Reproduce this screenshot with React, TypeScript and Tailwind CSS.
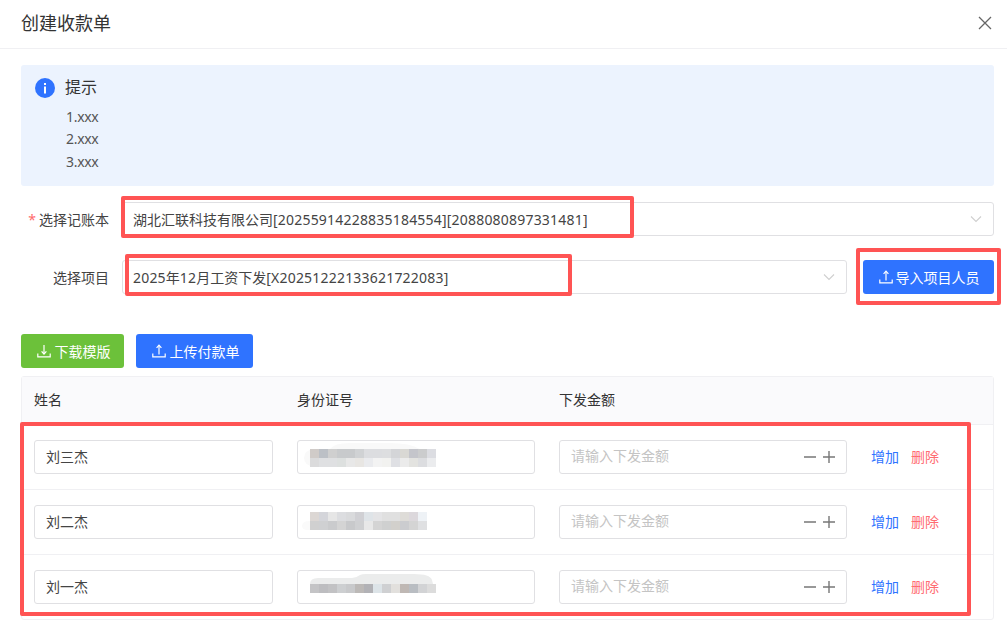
import React, { type ReactNode } from "react";

const rows = [
  {
    name: "刘三杰",
    shift: "translate-y-px",
    blob: "M-6 9q0-8 10-9h16q4-6 20-6h40q20 0 30 6h16v18h-122q-10-2-10-9",
    fill: "#f9f9f9",
    blur: [
      ["#d0cbc8", "#bcc0c6", "#cfcfcf", "#c8cacc", "#c8cacc", "#d0d2d4", "#dcdde0", "#dcdde0", "#dddee0", "#d4d5d8", "#d9d8d4", "#c4c5cb", "#cbcccd", "#dcdde2"],
      ["#dbdbdc", "#dfe0e2", "#dfe0e2", "#dde0df", "#e8e8e8", "#e8e6e3", "#eaebee", "#f3f3f3", "#f2f2f0", "#dfe0e4", "#ebebeb", "#e3e3e0", "#dcdde0", "#ebecee"],
    ],
  },
  {
    name: "刘二杰",
    shift: "-translate-y-px",
    blob: "M-8 14q0-5 8-5h8v9h-10q-6 0-6-4",
    fill: "#fafafa",
    blur: [
      ["#dcd7d4", "#d4d5da", "#e6e6e6", "#dcdde0", "#d9dadc", "#d0d0d4", "#dfe4e8", "#e4e4e6", "#e0e0e0", "#e0e0e0", "#dedcd8", "#dcd8dc", "#eef2f6"],
      ["#d0d0d0", "#cfd0d2", "#cacbcd", "#d4d4d4", "#c8c9cb", "#cfd0d2", "#e8e8e8", "#d4d4d4", "#cfd0d0", "#d2d0cc", "#cbcccf", "#d4d4d4", "#dfe0e2"],
    ],
  },
  {
    name: "刘一杰",
    shift: "-translate-y-[3px]",
    blob: "M0 9q0-6 8-6h34q4 0 8-3 2-1 6-1h48q16 0 18 6l1 4v9h-3v-9z",
    fill: "#ebecec",
    blur: [
      [],
      ["#c4c4c6", "#bdbdc0", "#c2c2c4", "#cdcfd1", "#c8c9cb", "#bcb9b7", "#b2b2b6", "#dde4e8", "#cfd0d2", "#e2e0dd", "#bfb8b4", "#b9bdc2", "#d2d3d5", "#dcdcdc"],
    ],
  },
];

function UploadIcon() {
  return (
    <svg width="14" height="14" viewBox="0 0 14 14" fill="none" stroke="currentColor" strokeWidth="1.2" className="shrink-0">
      <path d="M0.8 9.5v3.3h12.4v-3.3" />
      <path d="M7 10.5V1.5" />
      <path d="M4.6 3.8 7 1.2l2.4 2.6" />
    </svg>
  );
}

function DownloadIcon() {
  return (
    <svg width="14" height="14" viewBox="0 0 14 14" fill="none" stroke="currentColor" strokeWidth="1.2" className="shrink-0">
      <path d="M0.8 9.5v3.3h12.4v-3.3" />
      <path d="M7 1v8.6" />
      <path d="M4.6 7.4 7 10l2.4-2.6" />
    </svg>
  );
}

function Chevron() {
  return (
    <svg width="12" height="8" viewBox="0 0 12 8" fill="none" stroke="#cfcfcf" strokeWidth="1.1">
      <path d="M1 1.5l5 5 5-5" />
    </svg>
  );
}

function Select({ children, className }: { children: ReactNode; className: string }) {
  return (
    <div className={`flex h-[34px] items-center justify-between rounded-[3px] border border-[#e0e0e3] pl-[10px] pr-[11px] ${className}`}>
      <span className="whitespace-nowrap text-[14px] text-[#444]">{children}</span>
      <Chevron />
    </div>
  );
}

function Num({ children }: { children: ReactNode }) {
  return <span className="tracking-[0.2px]">{children}</span>;
}

function Mosaic({ row }: { row: (typeof rows)[number] }) {
  return (
    <svg width="126" height="18" viewBox="0 0 126 18" className={`block overflow-visible ${row.shift}`}>
      <path d={row.blob} fill={row.fill} />
      {row.blur.map((line, y) =>
        line.map((color, x) => <rect key={x} x={x * 9} y={y * 9} width="9" height="9" fill={color} />),
      )}
    </svg>
  );
}

function Highlight({ className }: { className: string }) {
  return <div className={`pointer-events-none absolute rounded-[2px] border-[4px] border-[#ff5454] ${className}`} />;
}

export default function App() {
  return (
    <div className="relative h-[625px] w-[1007px] overflow-hidden bg-white font-['Noto_Sans','Noto_Sans_CJK_SC',sans-serif] text-[14px] text-[#333]">
      <div className="flex h-[49px] items-center justify-between border-b border-[#f0f0f3] pl-[21px] pr-[15px]">
        <span className="mb-[2px] text-[18px] leading-[46px] text-[#333]">创建收款单</span>
        <svg width="14" height="14" viewBox="0 0 14 14" stroke="#666" strokeWidth="1.3" fill="none" className="mb-[2px]">
          <path d="M1 1l12 12M13 1L1 13" />
        </svg>
      </div>

      <div className="pl-[21px] pr-[13px] pt-[16px]">
        <div className="h-[121px] rounded-[3px] bg-[#ecf3fe] pl-[14px] pt-[13px]">
          <div className="flex h-[20px] items-center gap-[10px]">
            <svg width="20" height="20" viewBox="0 0 20 20" className="shrink-0">
              <circle cx="10" cy="10" r="10" fill="#2f73ff" />
              <rect x="9" y="8.5" width="2" height="7" fill="#fff" />
              <rect x="9" y="5" width="2" height="2" fill="#fff" />
            </svg>
            <span className="-translate-y-px text-[16px] text-[#333]">提示</span>
          </div>
          <div className="mt-[7.5px] pl-[31px] text-[14px] leading-[22.5px] tracking-[-0.3px] text-[#555]">
            <div>1.xxx</div>
            <div>2.xxx</div>
            <div>3.xxx</div>
          </div>
        </div>

        <div className="mt-[16px] flex items-center">
          <div className="w-[88px] shrink-0 text-right text-[#444]">
            <span className="mr-[3px] text-[#ff6b6b]">*</span>选择记账本
          </div>
          <Select className="ml-[13px] flex-1">
            湖北汇联科技有限公司<Num>[20255914228835184554][2088080897331481]</Num>
          </Select>
        </div>

        <div className="mt-[24px] flex items-center">
          <div className="w-[88px] shrink-0 text-right text-[#444]">选择项目</div>
          <Select className="ml-[13px] flex-1">
            <Num>2025</Num>年<Num>12</Num>月工资下发<Num>[X20251222133621722083]</Num>
          </Select>
          <button className="ml-[16px] flex h-[34px] w-[131px] items-center justify-center gap-[3px] rounded-[3px] bg-[#2f73ff] pl-[1px] text-white">
            <UploadIcon />
            导入项目人员
          </button>
        </div>

        <div className="mt-[40px] flex gap-[12px]">
          <button className="flex h-[34px] w-[103px] items-center justify-center gap-[4px] rounded-[3px] bg-[#6cc13a] pl-[2px] text-white">
            <DownloadIcon />
            下载模版
          </button>
          <button className="flex h-[34px] w-[117px] items-center justify-center gap-[4px] rounded-[3px] bg-[#2f73ff] pl-[2px] text-white">
            <UploadIcon />
            上传付款单
          </button>
        </div>

        <div className="mt-[8px] rounded-[3px] border border-[#f0f0f3]">
          <div className="grid h-[48px] grid-cols-[239px_238px_288px_1fr] items-center gap-x-6 border-b border-[#f0f0f3] bg-[#fafafc] pb-[2px] pl-3 text-[#333]">
            <div>姓名</div>
            <div>身份证号</div>
            <div>下发金额</div>
          </div>
          {rows.map((row, i) => (
            <div
              key={row.name}
              className={`grid grid-cols-[239px_238px_288px_1fr] items-center gap-x-6 pl-3 ${i < 2 ? "h-[65px] border-b border-[#f0f0f3]" : "h-[64px]"}`}
            >
              <div className="flex h-[34px] items-center rounded-[3px] border border-[#e0e0e3] pb-[2px] pl-[11px] text-[#444]">{row.name}</div>
              <div className="flex h-[34px] items-center rounded-[3px] border border-[#e0e0e3] pl-3">
                <Mosaic row={row} />
              </div>
              <div className="flex h-[34px] items-center justify-between rounded-[3px] border border-[#e0e0e3] pl-[11px] pr-[11px]">
                <span className="-translate-y-[2px] text-[#c4c4c4]">请输入下发金额</span>
                <svg width="31" height="12" viewBox="0 0 31 12" stroke="#777" strokeWidth="1.4" fill="none">
                  <path d="M0 6h12M19 6h12M25 0v12" />
                </svg>
              </div>
              <div className="flex gap-[12px] pb-[2px]">
                <span className="text-[#2f73ff]">增加</span>
                <span className="text-[#ff6b72]">删除</span>
              </div>
            </div>
          ))}
        </div>
      </div>

      <Highlight className="left-[121px] top-[196px] h-[42px] w-[513px]" />
      <Highlight className="left-[125px] top-[254px] h-[42px] w-[447px]" />
      <Highlight className="left-[856px] top-[248px] h-[57px] w-[145px]" />
      <Highlight className="left-[20px] top-[422px] h-[194px] w-[951px]" />
    </div>
  );
}
